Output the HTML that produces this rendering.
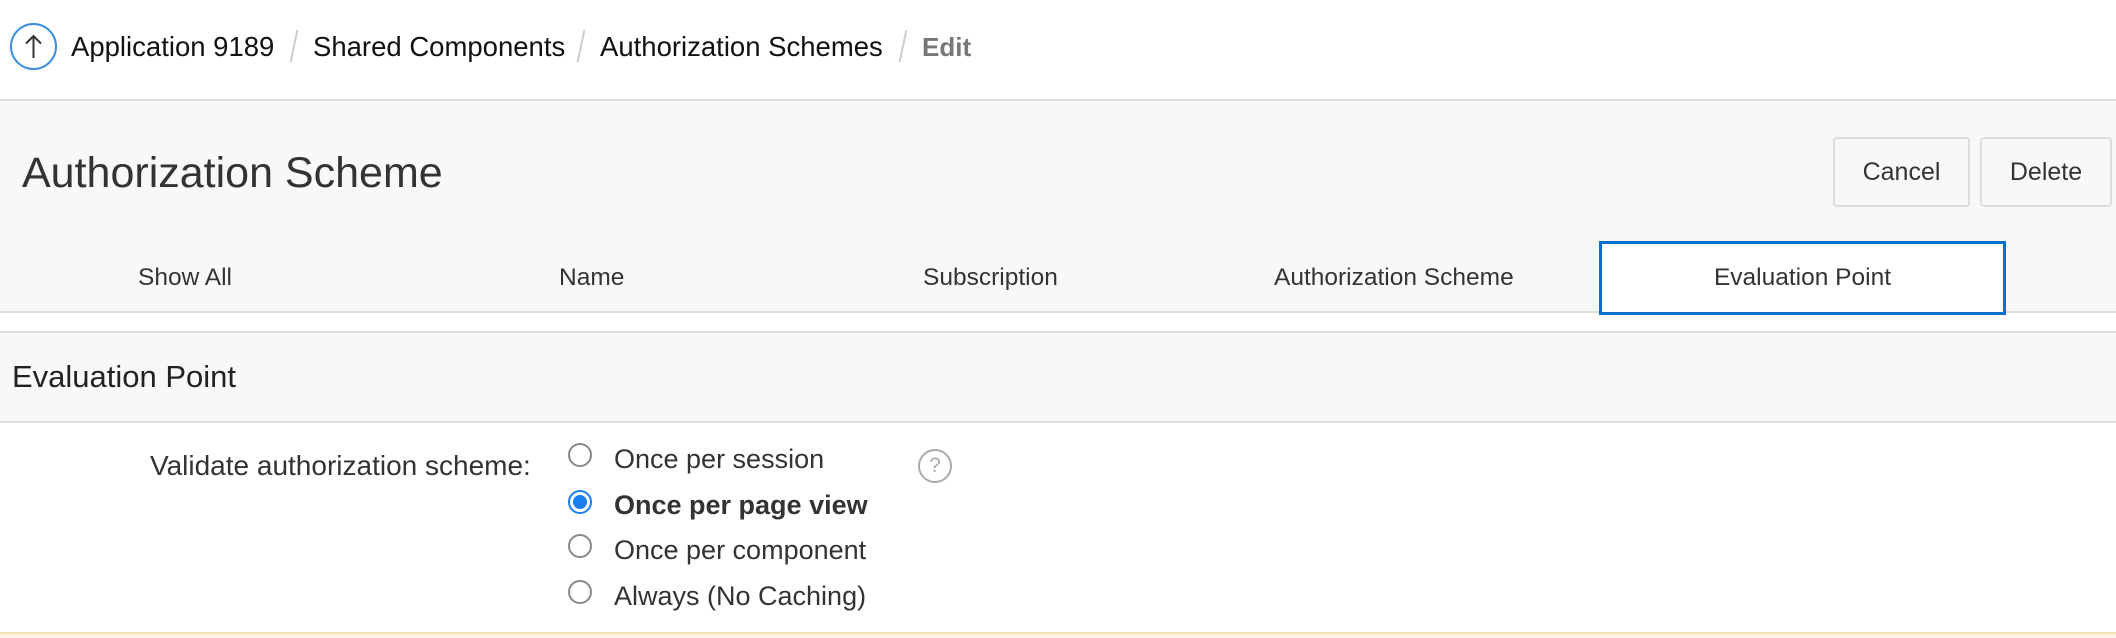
<!DOCTYPE html>
<html><head><style>
*{margin:0;padding:0;box-sizing:border-box}
body{width:2116px;height:638px;overflow:hidden;background:#fff;font-family:"Liberation Sans",sans-serif;color:#222;position:relative}
.a{position:absolute;white-space:nowrap}
</style></head><body>
<div class="a" style="left:10px;top:23px;width:47px;height:47px;border:2px solid #3a8fdc;border-radius:50%"></div>
<svg class="a" style="left:10px;top:23px" width="47" height="47"><path d="M23.5 13V35M16 20.5L23.5 13L31 20.5" stroke="#333" stroke-width="2" fill="none"/></svg>
<div class="a" style="left:71px;top:31px;font-size:27.5px;color:#111">Application 9189</div>
<div class="a" style="left:293px;top:30px;width:2px;height:32px;background:#ccc;transform:skewX(-12deg)"></div>
<div class="a" style="left:313px;top:31px;font-size:27.5px;color:#111">Shared Components</div>
<div class="a" style="left:580px;top:30px;width:2px;height:32px;background:#ccc;transform:skewX(-12deg)"></div>
<div class="a" style="left:600px;top:31px;font-size:27.5px;color:#111">Authorization Schemes</div>
<div class="a" style="left:902px;top:30px;width:2px;height:32px;background:#ccc;transform:skewX(-12deg)"></div>
<div class="a" style="left:922px;top:32px;font-size:26px;color:#777;font-weight:bold">Edit</div>

<div class="a" style="left:0;top:99px;width:2116px;height:214px;background:#f8f8f8;border-top:2px solid #ddd;border-bottom:2px solid #ddd"></div>
<div class="a" style="left:22px;top:149px;font-size:43px;color:#333">Authorization Scheme</div>
<div class="a" style="left:1833px;top:137px;width:137px;height:70px;border:2px solid #ddd;border-radius:4px;background:#f8f8f8;font-size:25px;color:#333;text-align:center;line-height:66px">Cancel</div>
<div class="a" style="left:1980px;top:137px;width:132px;height:70px;border:2px solid #ddd;border-radius:4px;background:#f8f8f8;font-size:25px;color:#333;text-align:center;line-height:66px">Delete</div>

<div class="a" style="left:138px;top:264px;font-size:24.5px;color:#333">Show All</div>
<div class="a" style="left:559px;top:264px;font-size:24.5px;color:#333">Name</div>
<div class="a" style="left:923px;top:264px;font-size:24.5px;color:#333">Subscription</div>
<div class="a" style="left:1274px;top:264px;font-size:24.5px;color:#333">Authorization Scheme</div>
<div class="a" style="left:1599px;top:241px;width:407px;height:74px;border:3px solid #0a6fcf;background:#fff;font-size:24.5px;color:#333;text-align:center;line-height:68px">Evaluation Point</div>

<div class="a" style="left:0;top:331px;width:2116px;height:92px;background:#f8f8f8;border-top:2px solid #ddd;border-bottom:2px solid #ddd"></div>
<div class="a" style="left:12px;top:359px;font-size:31px;color:#222">Evaluation Point</div>

<div class="a" style="left:150px;top:450px;font-size:28px;color:#333">Validate authorization scheme:</div>
<div class="a" style="left:568px;top:443px;width:24px;height:24px;border:2px solid #888;border-radius:50%;background:#fff"></div>
<div class="a" style="left:568px;top:490px;width:24px;height:24px;border:2px solid #1a7ef0;border-radius:50%;background:#fff"><div style="margin:3px;width:14px;height:14px;border-radius:50%;background:#1a7ef0"></div></div>
<div class="a" style="left:568px;top:534px;width:24px;height:24px;border:2px solid #888;border-radius:50%;background:#fff"></div>
<div class="a" style="left:568px;top:580px;width:24px;height:24px;border:2px solid #888;border-radius:50%;background:#fff"></div>
<div class="a" style="left:614px;top:444px;font-size:27px;color:#333">Once per session</div>
<div class="a" style="left:614px;top:490px;font-size:27px;color:#333;font-weight:bold">Once per page view</div>
<div class="a" style="left:614px;top:535px;font-size:27px;color:#333">Once per component</div>
<div class="a" style="left:614px;top:581px;font-size:27px;color:#333">Always (No Caching)</div>
<div class="a" style="left:918px;top:449px;width:34px;height:34px;border:2px solid #aaa;border-radius:50%;font-size:21px;color:#aaa;text-align:center;line-height:30px">?</div>
<div class="a" style="left:0;top:632px;width:2116px;height:6px;background:#fdf6e2;border-top:2px solid #f2e2b4"></div>
</body></html>
